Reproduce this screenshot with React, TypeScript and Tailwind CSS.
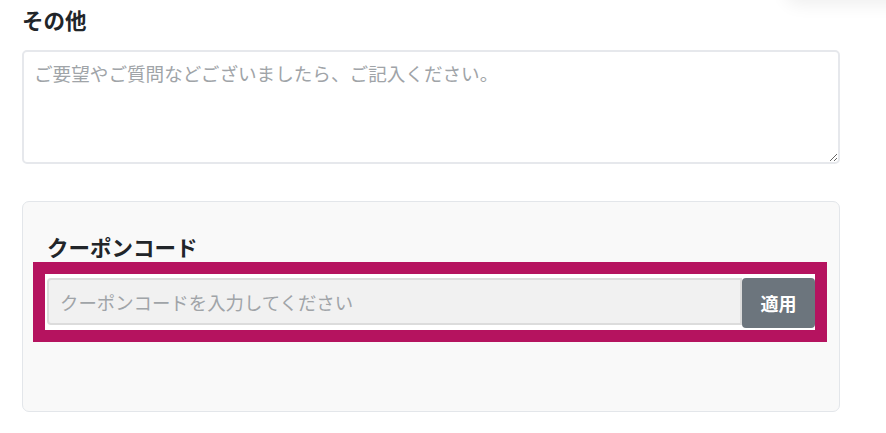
import React, { useState } from 'react';

const font = { fontFamily: '"Noto Sans CJK JP", "Noto Sans", sans-serif' };

const App: React.FC = () => {
  const [note, setNote] = useState('');
  const [coupon, setCoupon] = useState('');

  return (
    <div
      className="relative w-[886px] h-[433px] overflow-hidden bg-white pl-[22px] pr-[46px] pt-[5px] text-[#212529]"
      style={font}
    >
      {/* floating element edge peeking in from above */}
      <div className="absolute -top-[52px] right-[-30px] w-[130px] h-[50px] rounded-[12px] bg-white shadow-[0_6px_18px_rgba(0,0,0,0.07)]" />

      <h3 className="text-[21.5px] font-bold leading-[30px]">その他</h3>

      <textarea
        value={note}
        onChange={e => setNote(e.target.value)}
        placeholder="ご要望やご質問などございましたら、ご記入ください。"
        className="mt-[15px] block h-[114px] w-full rounded-[5px] border-2 border-[#e6e8ec] px-[10px] py-[7px] text-[18.6px] leading-[28px] placeholder:text-[#a0a4a8] outline-none"
      />

      <div className="mt-[37px] h-[211px] rounded-[7px] border border-[#e3e6ea] bg-[#f9f9f9] px-[10px] pt-[30px]">
        <div className="ml-[14px] text-[21.5px] font-bold leading-[30px]">クーポンコード</div>
        <div className="h-[80px] w-[794px] border-[12px] border-[#b5135f] bg-white pl-[2px] pt-[4px]">
          <div className="flex h-[50px] w-[768px] items-start">
            <input
              value={coupon}
              onChange={e => setCoupon(e.target.value)}
              placeholder="クーポンコードを入力してください"
              className="h-[47px] flex-1 rounded-l-[4px] border-2 border-[#dcdcdc] bg-[#f1f1f1] px-[11px] text-[18.4px] placeholder:text-[#a0a4a8] outline-none"
            />
            <button className="h-[50px] w-[73px] rounded-[4px] bg-[#6c757d] text-[18px] font-bold text-white">
              適用
            </button>
          </div>
        </div>
      </div>
    </div>
  );
};

export default App;
